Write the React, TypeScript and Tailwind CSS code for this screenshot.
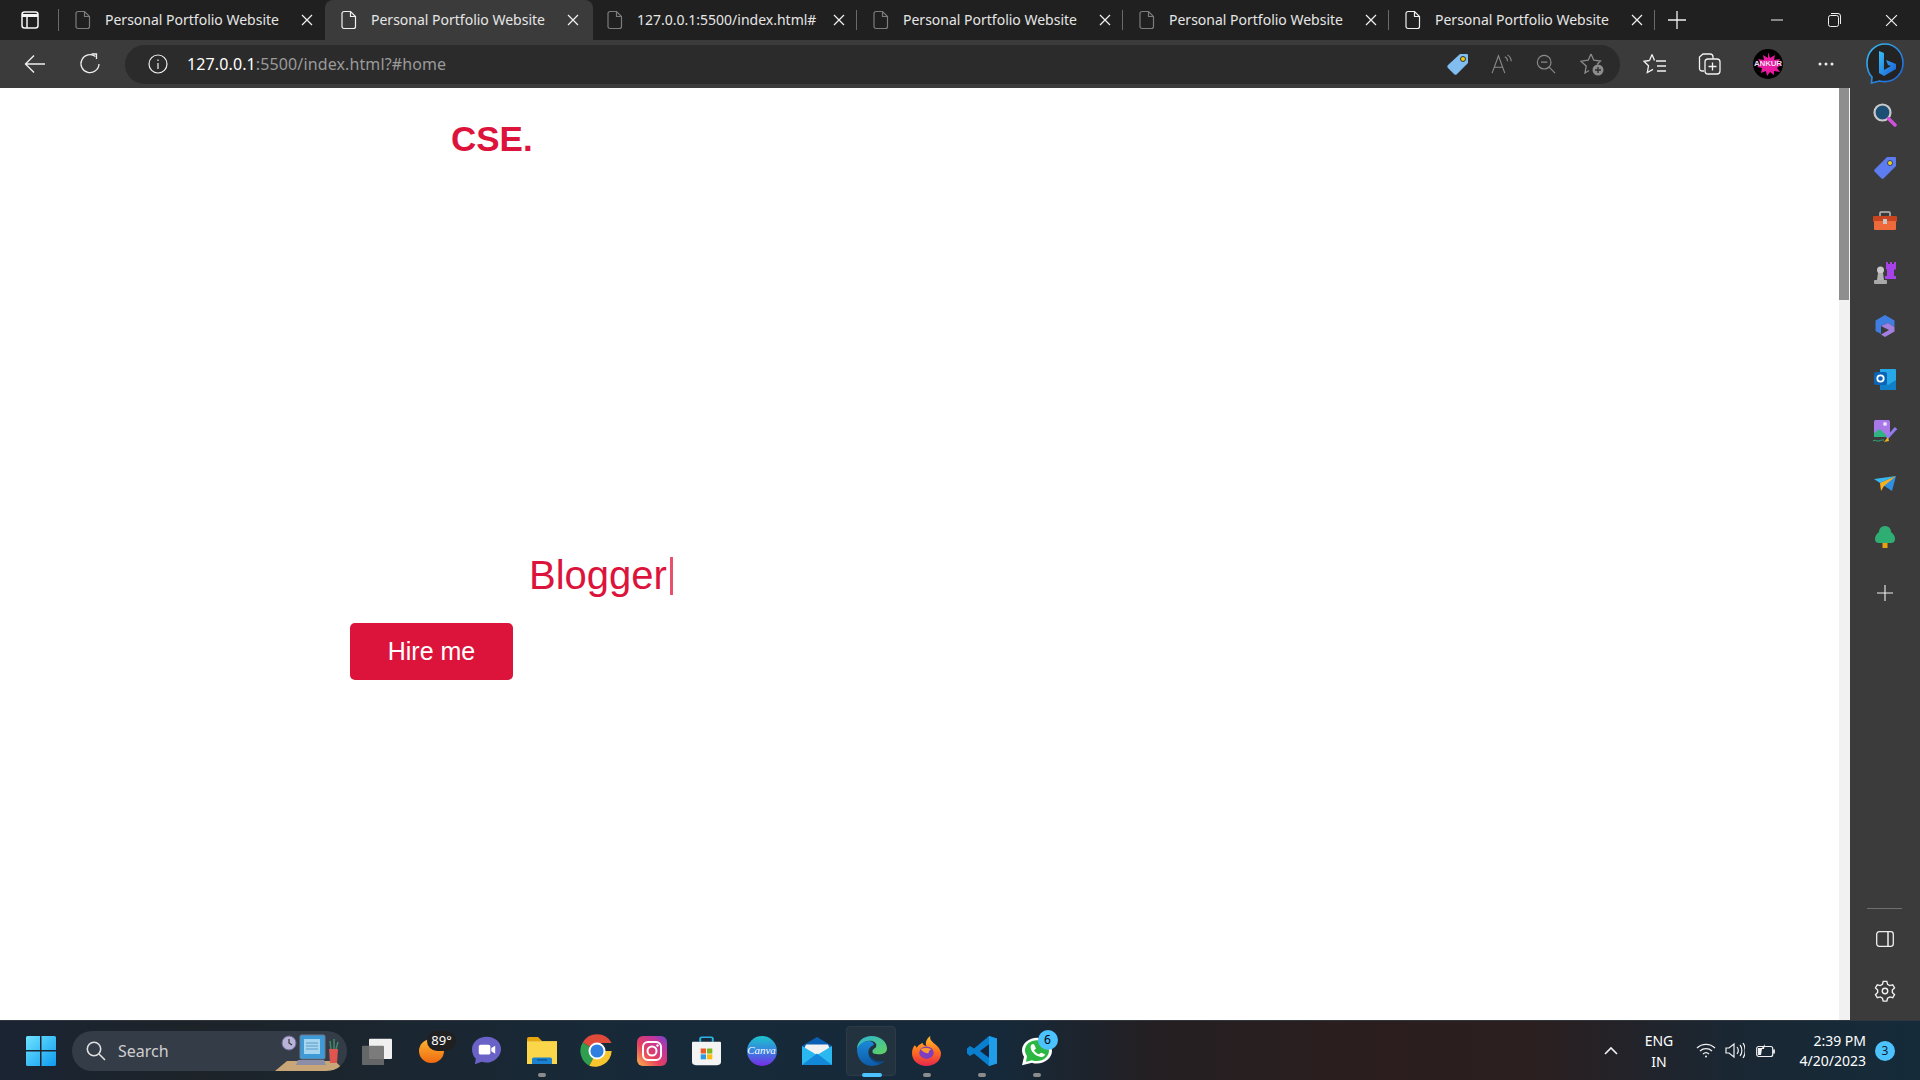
import React from "react";

const ui = { fontFamily: '"Noto Sans", "Open Sans", sans-serif' };

function FileIcon({ active }: { active?: boolean }) {
  return (
    <svg width="18" height="20" viewBox="0 0 18 20" fill="none" stroke={active ? "#f0f0f0" : "#7c7c7c"} strokeWidth="1.2">
      <path d="M4 1.5h6.5L15.5 6.5V16.5a2 2 0 0 1-2 2H4a2 2 0 0 1-2-2V3.500a2 2 0 0 1 2-2Z" />
      <path d="M10.5 1.500V6.500H15.500" />
    </svg>
  );
}

function CloseX({ size = 12, w = 1.2 }: { size?: number; w?: number }) {
  return (
    <svg width={size} height={size} viewBox="0 0 12 12" stroke="#f2f2f2" strokeWidth={w}>
      <path d="M1 1l10 10M11 1L1 11" />
    </svg>
  );
}

function Tab({ title, active, bright, sep = true }: { title: string; active?: boolean; bright?: boolean; sep?: boolean }) {
  return (
    <div className={`relative flex h-10 shrink-0 items-center pl-[15px] ${active ? "z-10 w-[268px] rounded-t-lg bg-[#3b3b3b] pr-[14px]" : "w-[266px] pr-[12px]"}`}>
      <FileIcon active={active || bright} />
      <span className="-mt-[2px] ml-[13px] flex-1 truncate text-[14px] text-[#e6e6e6]" style={ui}>{title}</span>
      <CloseX />
      {sep && <span className="absolute right-0 top-[10px] h-[20px] w-px bg-[#6a6a6a]" />}
    </div>
  );
}

function Side({ children }: { children: React.ReactNode }) {
  return <div className="flex h-[52.7px] w-full items-center justify-center">{children}</div>;
}

function TaskItem({ children, dot, active }: { children: React.ReactNode; dot?: boolean; active?: boolean }) {
  return (
    <div className="relative flex h-[60px] w-[55px] shrink-0 items-center justify-center">
      {active && <span className="absolute left-[2px] top-[5px] h-[50px] w-[50px] rounded-[4px] border border-[#2c3b47] bg-[#22333f]" />}
      <span className="relative flex items-center justify-center">{children}</span>
      {dot && <span className={`absolute bottom-[4px] left-1/2 h-[3.500px] -translate-x-1/2 rounded-full ${active ? "w-5 bg-[#4cc2ff]" : "w-2 bg-[#8c8c8c]"}`} />}
    </div>
  );
}

function Windows() {
  return (
    <svg width="30" height="30" viewBox="0 0 30 30">
      <defs>
        <linearGradient id="w" x1="0" y1="0" x2="1" y2="1"><stop offset="0" stopColor="#6fe3ff" /><stop offset="1" stopColor="#0e9bf0" /></linearGradient>
      </defs>
      <path d="M0 1.500A1.500 1.500 0 0 1 1.500 0H14v14H0ZM15.500 0H28.500A1.500 1.500 0 0 1 30 1.500V14H15.500ZM0 15.500h14V30H1.500A1.500 1.500 0 0 1 0 28.500ZM15.500 15.500H30V28.500A1.500 1.500 0 0 1 28.500 30H15.500Z" fill="url(#w)" />
    </svg>
  );
}

function SearchArt() {
  return (
    <svg width="66" height="38" viewBox="0 0 66 38">
      <path d="M12 28 L60 28 L66 34 Q60 38 50 38 L0 38Z" fill="#c9a678" />
      <circle cx="14" cy="10" r="7" fill="#b8b4d8" stroke="#6e6a96" />
      <path d="M14 6v4l3 2" stroke="#333" strokeWidth="1.2" fill="none" />
      <rect x="25" y="2" width="25" height="24" rx="1.500" fill="#3f9bd8" stroke="#6a7a90" />
      <rect x="29" y="6" width="16" height="15" fill="#a6d5f0" />
      <path d="M31 10h12M31 13h12M31 16h12" stroke="#5b9ac4" />
      <path d="M23 27h26l2 5H21Z" fill="#8c8ea8" />
      <path d="M54 16h9l-1 14h-7Z" fill="#e0564f" />
      <path d="M56 16l-1-8M59 16V6M61 16l2-7" stroke="#3d8b6a" strokeWidth="1.500" />
    </svg>
  );
}

function Chrome() {
  return (
    <svg width="34" height="34" viewBox="2 2 44 44">
      <path d="M24 24 5.500 13A21.500 21.500 0 0 1 43 13.500H24Z" fill="#e04a3b" />
      <path d="M24 24 14 43A21.500 21.500 0 0 1 5.500 13Z" fill="#2f9e4f" />
      <path d="M24 24H43A21.500 21.500 0 0 1 14 43Z" fill="#f7c52d" />
      <circle cx="24" cy="24" r="11" fill="#fff" />
      <circle cx="24" cy="24" r="8.500" fill="#2f7fe0" />
    </svg>
  );
}

function Instagram() {
  return (
    <svg width="30" height="30" viewBox="0 0 30 30">
      <defs>
        <linearGradient id="ig" x1="0" y1="1" x2="1" y2="0"><stop offset="0" stopColor="#fdb44a" /><stop offset=".4" stopColor="#e6405f" /><stop offset=".75" stopColor="#c0359f" /><stop offset="1" stopColor="#6a4ad0" /></linearGradient>
      </defs>
      <rect width="30" height="30" rx="6" fill="url(#ig)" />
      <rect x="6" y="6" width="18" height="18" rx="5" fill="none" stroke="#fff" strokeWidth="2" />
      <circle cx="15" cy="15" r="4.500" fill="none" stroke="#fff" strokeWidth="2" />
      <circle cx="20.500" cy="9.500" r="1.200" fill="#fff" />
    </svg>
  );
}

function Store() {
  return (
    <svg width="29" height="30" viewBox="0 0 30 36" preserveAspectRatio="none">
      <path d="M8.500 7V3a1.500 1.500 0 0 1 1.500-1.500h10A1.500 1.500 0 0 1 21.500 3v4" fill="none" stroke="#2ab4e8" strokeWidth="2" />
      <path d="M1 7h28a1 1 0 0 1 1 1v23a4 4 0 0 1-4 4H4a4 4 0 0 1-4-4V8a1 1 0 0 1 1-1Z" fill="#f4f4f4" />
      <rect x="9" y="15" width="5.500" height="6" fill="#ea5a2b" />
      <rect x="15.500" y="15" width="5.500" height="6" fill="#7db81f" />
      <rect x="9" y="22" width="5.500" height="6" fill="#2b9be8" />
      <rect x="15.500" y="22" width="5.500" height="6" fill="#fbbc10" />
    </svg>
  );
}

function Mail() {
  return (
    <svg width="30" height="28" viewBox="0 0 30 34" preserveAspectRatio="none">
      <path d="M0 11 15 0l15 11v6H0Z" fill="#0a5fb4" />
      <path d="M4 9h22l2 6-13 9L2 15Z" fill="#f2f2f2" />
      <path d="M0 11l15 11 15-11v23H0Z" fill="#29b8f0" />
      <path d="M0 34 15 20l15 14Z" fill="#1488d8" />
    </svg>
  );
}

function Edge() {
  return (
    <svg width="31" height="30" viewBox="0 0 32 36" preserveAspectRatio="none">
      <defs>
        <linearGradient id="e1" x1="0" y1="0" x2="1" y2="1"><stop offset="0" stopColor="#2bb3d8" /><stop offset="1" stopColor="#62d35c" /></linearGradient>
        <linearGradient id="e2" x1="0" y1="0" x2="0" y2="1"><stop offset="0" stopColor="#1a8ad8" /><stop offset="1" stopColor="#0d5ba8" /></linearGradient>
      </defs>
      <path d="M1 16C1 6 8 0 16 0c9 0 16 7 16 15 0 5-4 7-8 7-5 0-7-1-7-3 0-5 4-3 4-8 0-3-4-6-9-5C7 7 3 11 1 16Z" fill="url(#e1)" />
      <path d="M1 16C3 10 8 6 13 6c4 0 6 3 5 5-3 1-6 5-5 11 1 6 6 11 13 11-3 2-6 3-10 3C7 36 1 27 1 16Z" fill="url(#e2)" />
      <path d="M13 22c1 6 6 11 13 11 2-1 3-2 4-3-4 1-9 1-12-2-3-2-4-5-5-6Z" fill="#0b4c92" />
    </svg>
  );
}

function Firefox() {
  return (
    <svg width="29" height="30" viewBox="0 0 30 36" preserveAspectRatio="none">
      <defs>
        <linearGradient id="ff" x1="0" y1="0" x2="0" y2="1"><stop offset="0" stopColor="#ffc02e" /><stop offset=".55" stopColor="#ff6a1f" /><stop offset="1" stopColor="#e6274f" /></linearGradient>
      </defs>
      <path d="M15 36C6 36 0 29 0 21c0-4 1-8 3-10l2 3c1-3 3-4 6-6 0 2 1 3 4 4-2-4 1-10 4-12-1 4 1 6 5 10 3 3 6 7 6 11 0 9-7 15-15 15Z" fill="url(#ff)" />
      <circle cx="15" cy="20" r="7.500" fill="#7d3ec0" />
      <path d="M9 16c3-2 8-2 11 0-2 1-3 3-3 5-3 0-6-2-8-5Z" fill="#ff9a2e" />
    </svg>
  );
}

function VSCode() {
  return (
    <svg width="30" height="30" viewBox="0 0 30 36" preserveAspectRatio="none">
      <path d="M22 0l8 3v30l-8 3L7 21l-4 3-3-3V15l3-3 4 3Z" fill="#0a7fcf" />
      <path d="M22 0l8 3v30l-8 3Z" fill="#1f9de8" />
      <path d="M22 10v16l-9-8Z" fill="#14243a" />
    </svg>
  );
}

function WhatsApp() {
  return (
    <svg width="30" height="30" viewBox="0 0 30 36" preserveAspectRatio="none">
      <path d="M15 2C7 2 0 9 0 17c0 3 1 6 2 8L0 35l10-3c2 1 3 1 5 1 8 0 15-7 15-15S23 2 15 2Z" fill="#fff" />
      <path d="M15 5C8.500 5 3 10 3 17c0 3 1 5 2 7L4 31l6-2c2 1 3 1 5 1 7 0 12-6 12-13S21.500 5 15 5Z" fill="#2bb741" />
      <path d="M10 10c-1 1-2 3-1 6 1 4 5 8 9 9 3 1 5-1 5-3l-4-2-2 2c-2-1-4-3-5-5l2-2-2-5Z" fill="#fff" />
    </svg>
  );
}

function App() {
  return (
    <div className="flex h-[1080px] w-[1920px] flex-col overflow-hidden bg-white">
      {/* tab strip */}
      <div className="flex h-10 shrink-0 items-center bg-[#202020]">
        <div className="relative flex h-10 w-[59px] shrink-0 items-center pl-[21px]">
          <svg width="18" height="18" viewBox="0 0 18 18" fill="none" stroke="#f5f5f5" strokeWidth="1.500">
            <rect x="1" y="1" width="16" height="16" rx="2.500" />
            <path d="M1 4.500h16" strokeWidth="3" />
            <path d="M6 5v12" />
          </svg>
          <span className="absolute right-0 top-[9px] h-[22px] w-px bg-[#6a6a6a]" />
        </div>
        <Tab title="Personal Portfolio Website" sep={false} />
        <Tab title="Personal Portfolio Website" active sep={false} />
        <div className="-ml-[2px] flex">
          <Tab title="127.0.0.1:5500/index.html#" />
          <Tab title="Personal Portfolio Website" />
          <Tab title="Personal Portfolio Website" />
          <Tab title="Personal Portfolio Website" bright />
        </div>
        <div className="ml-[12px] flex w-[20px] items-center justify-center">
          <svg width="18" height="18" viewBox="0 0 18 18" stroke="#f0f0f0" strokeWidth="1.300"><path d="M9 0v18M0 9h18" /></svg>
        </div>
        <div className="ml-[75px] flex w-[30px] justify-center">
          <svg width="12" height="2" viewBox="0 0 12 2" stroke="#eee"><path d="M0 1h12" /></svg>
        </div>
        <div className="ml-[27px] flex w-[30px] justify-center">
          <svg width="13" height="14" viewBox="0 0 13 14" fill="none" stroke="#eee"><rect x=".5" y="2.500" width="10" height="11" rx="2" /><path d="M3 .5h7a2.500 2.500 0 0 1 2.500 2.500v8" /></svg>
        </div>
        <div className="ml-[27px] flex w-[30px] justify-center"><CloseX size={13} w={1.1} /></div>
      </div>

      {/* toolbar */}
      <div className="flex h-12 shrink-0 items-center bg-[#3b3b3b]">
        <div className="flex w-[70px] justify-center">
          <svg width="22" height="20" viewBox="0 0 22 20" fill="none" stroke="#eee" strokeWidth="1.400"><path d="M21 10H2M10 1.500 1.500 10l8.500 8.500" /></svg>
        </div>
        <div className="flex w-[40px] justify-center">
          <svg width="22" height="22" viewBox="0 0 22 22" fill="none" stroke="#eee" strokeWidth="1.300"><path d="M16.500 3.500A9 9 0 1 0 20 11" /><path d="M12.500 1h5v5" /></svg>
        </div>
        <div className="ml-[15px] flex h-[39px] w-[1495px] items-center rounded-full bg-[#2b2b2b]">
          <div className="ml-[23px] flex w-5 justify-center">
            <svg width="20" height="20" viewBox="0 0 20 20" fill="none" stroke="#eee" strokeWidth="1.200"><circle cx="10" cy="10" r="9" /><path d="M10 9v6M10 5.500v1.500" /></svg>
          </div>
          <span className="ml-[19px] text-[16px] tracking-[0.12px] text-[#9a9a9a]" style={ui}><span className="text-white">127.0.0.1</span>:5500/index.html?#home</span>
          <div className="ml-auto mr-[16px] flex items-center gap-[20px]">
            <svg width="24" height="24" viewBox="0 0 24 24"><path d="M14 2h7a1 1 0 0 1 1 1v8L11 22a2 2 0 0 1-3 0l-6-6a2 2 0 0 1 0-3Z" fill="#82bdf0" /><circle cx="17" cy="7" r="2.500" fill="#f2c811" stroke="#333" /></svg>
            <svg className="ml-[1px]" width="24" height="20" viewBox="0 0 26 22" fill="none" stroke="#8c8c8c" strokeWidth="1.200"><path d="M1 21 8 2l7 19M3.500 14.500h9" /><path d="M15 3c2 1 3 3 3 5M18 1c3 2 4 4 4 7" /></svg>
            <svg className="ml-[1px]" width="20" height="20" viewBox="0 0 22 22" fill="none" stroke="#8c8c8c" strokeWidth="1.300"><circle cx="9" cy="9" r="7.500" /><path d="M5.500 9h7M14.500 14.500l6.500 6.500" /></svg>
            <svg className="ml-[4px]" width="24" height="24" viewBox="0 0 24 24" fill="none" stroke="#8c8c8c" strokeWidth="1.300"><path d="M11 2 13.800 8.200 20.500 9 17 12.500M9 18.500 5 21l1.200-7L1 9.200 8.200 8.200 11 2" /><circle cx="18" cy="18" r="5.500" fill="#8c8c8c" stroke="none" /><path d="M18 15v6M15 18h6" stroke="#2b2b2b" /></svg>
          </div>
        </div>
        <div className="ml-[22px] flex w-[26px] justify-center">
          <svg width="24" height="22" viewBox="0 0 24 22" fill="none" stroke="#f2f2f2" strokeWidth="1.300"><path d="M9 1.500 11.500 7.500M6.500 7.500 1 8.300l4.500 4.500-1.200 6.800 5.700-3.200M6.500 7.500 9 1.500" /><path d="M13 8h10M14 13h9M14 18h9" /></svg>
        </div>
        <div className="ml-[29px] flex w-[26px] justify-center">
          <svg width="24" height="24" viewBox="0 0 24 24" fill="none" stroke="#f2f2f2" strokeWidth="1.300"><path d="M6 19H4a2.500 2.500 0 0 1-2.500-2.500V5L5 2h7a3 3 0 0 1 3 3v2" /><rect x="7" y="7" width="15" height="15" rx="3" /><path d="M14.500 10.500v8M10.500 14.500h8" /></svg>
        </div>
        <div className="relative ml-[30px] flex h-[30px] w-[30px] items-center justify-center overflow-hidden rounded-full bg-black">
          <svg className="absolute" width="30" height="30" viewBox="0 0 30 30"><path d="M15 3l2 6 5-3-1 5 6-1-3 5 5 0-5 4 3 4-6-1 0 4-4-3-3 4-1-5-5 2 1-5-5-1 4-3-3-5 6 1-1-5 5 3Z" fill="#e81aa0" /></svg>
          <span className="relative text-[8px] font-bold leading-none tracking-[-0.2px] text-[#f5d9ee]" style={{ fontFamily: '"Liberation Sans", sans-serif' }}>ANKUR</span>
        </div>
        <div className="ml-[35px] flex w-[16px] justify-center">
          <svg width="16" height="4" viewBox="0 0 16 4" fill="#eee"><circle cx="2" cy="2" r="1.500" /><circle cx="8" cy="2" r="1.500" /><circle cx="14" cy="2" r="1.500" /></svg>
        </div>
        <div className="ml-[32px] flex w-[38px] justify-center">
          <svg width="38" height="42" viewBox="0 0 38 42" fill="none">
            <defs><linearGradient id="bg" x1="0" y1="0" x2="1" y2="1"><stop offset="0" stopColor="#37bdf5" /><stop offset="1" stopColor="#1b5fd8" /></linearGradient></defs>
            <path d="M19 1C9 1 1 9 1 20c0 6 2 11 5 14l-.5 6 8-2c2 .5 3.500 .6 5.500 .6 10 0 18-8 18-18.600S29 1 19 1Z" stroke="url(#bg)" strokeWidth="1.600" fill="#232323" />
            <path d="M13 8l5 2v17l7-4-3-1-2-5 10 4v5l-12 7-5-3Z" fill="url(#bg)" />
          </svg>
        </div>
      </div>

      {/* middle */}
      <div className="flex min-h-0 flex-1">
        <main className="w-[1839px] shrink-0 bg-white" style={{ fontFamily: '"Liberation Sans", Arial, sans-serif' }}>
          <div className="ml-[451px] mt-[31px] text-[35px] font-bold leading-10 text-[#dc143c]">CSE.</div>
          <div className="ml-[529px] mt-[392px] flex h-12 items-center text-[40px] leading-[48px] text-[#dc143c]">
            Blogger<span className="ml-[3px] mt-[1px] h-[38px] w-[3px] bg-[#e8506d]" />
          </div>
          <button className="ml-[350px] mt-[24px] flex h-[57px] w-[163px] items-center justify-center rounded-[5px] bg-[#dc143c] text-[25px] text-white">Hire me</button>
        </main>
        <div className="flex w-[11px] shrink-0 flex-col bg-[#f1f1f1]">
          <div className="h-[212px] w-[10px] bg-[#8e8e8e]" />
        </div>
        <aside className="flex w-[70px] shrink-0 flex-col items-center bg-[#3b3b3b] pt-[1px] pr-[1px]">
          <Side>
            <svg width="24" height="24" viewBox="0 0 24 24"><circle cx="9.500" cy="9.500" r="8" fill="#1d4f74" stroke="#c9c9c9" strokeWidth="2.200" /><path d="M15.500 15.500 22 22" stroke="#d44fdc" strokeWidth="3.500" strokeLinecap="round" /></svg>
          </Side>
          <Side>
            <svg width="22" height="22" viewBox="0 0 22 22"><path d="M13 0h8a1 1 0 0 1 1 1v8L10 21a2 2 0 0 1-3 0l-6-6a2 2 0 0 1 0-3Z" fill="#5c7cf0" /><circle cx="16" cy="6" r="2.500" fill="#f2d311" stroke="#2d3a80" /></svg>
          </Side>
          <Side>
            <svg width="24" height="20" viewBox="0 0 24 20"><path d="M7 5V2a1 1 0 0 1 1-1h8a1 1 0 0 1 1 1v3" fill="none" stroke="#bbb" strokeWidth="1.500" /><rect y="5" width="24" height="6" rx="1" fill="#c8441f" /><rect x="1" y="10" width="22" height="9" rx="1" fill="#ef6a3a" /><rect x="10" y="8" width="4" height="5" fill="#c8c8c8" /></svg>
          </Side>
          <Side>
            <svg width="24" height="24" viewBox="0 0 24 24"><path d="M14 1h2v2h2V1h2v2h2V1h2v7l-2 1v6h2v3H13v-3h2V9l-1-1Z" transform="translate(-1 0)" fill="#a742e8" /><circle cx="7.500" cy="9" r="3.500" fill="#c8c8c8" /><path d="M5 12h5l1 7H4Z" fill="#b0b0b0" /><rect x="1" y="19" width="13" height="4" rx="1" fill="#a8a8a8" /></svg>
          </Side>
          <Side>
            <svg width="22" height="24" viewBox="0 0 22 24" fill="none"><path d="M11 1 20.500 6.500 V13 L14 9 7 12 V20 L1.500 17 V6.500Z" fill="#3f7de0" /><path d="M7 12l7-3 6.500 4v4.500L11 23 7 20.500l8-4.500Z" fill="#a37fe0" /></svg>
          </Side>
          <Side>
            <svg width="22" height="22" viewBox="0 0 22 22"><path d="M6 1h15a1 1 0 0 1 1 1v19a1 1 0 0 1-1 1H6Z" fill="#27a8e8" /><path d="M6 12l8 5 8-5v10H6Z" fill="#1080c8" /><rect y="4" width="13" height="13" rx="2" fill="#0a64b8" /><circle cx="6.500" cy="10.500" r="3.200" fill="none" stroke="#fff" strokeWidth="1.800" /></svg>
          </Side>
          <Side>
            <svg width="24" height="24" viewBox="0 0 24 24"><rect x="1" y="1" width="16" height="17" rx="1.500" fill="#a878e8" /><path d="M1 18V14l6-4 8 8Z" fill="#2fb380" /><circle cx="12" cy="5" r="2" fill="#e8dcfa" /><path d="M23 9 14 19" stroke="#8f7cf0" strokeWidth="3" /><path d="M15 18l-4 5 5-1Z" fill="#f2b418" /><path d="M0 22c3-2 4 1 6 0s3-1 5-1" stroke="#2fb380" fill="none" /></svg>
          </Side>
          <Side>
            <svg width="22" height="16" viewBox="0 0 22 16"><path d="M22 0 0 3l6 4Z" fill="#38b8f0" /><path d="M22 0 6 7l12 8Z" fill="#2f8fe0" /><path d="M22 0 6 7l1 8 3-5Z" fill="#f5b120" /></svg>
          </Side>
          <Side>
            <svg width="20" height="22" viewBox="0 0 20 22"><path d="M10 0c4 0 6 3 6 6 3 2 4 5 4 7 0 3-2 4-4 4H4c-2 0-4-1-4-4 0-2 1-5 4-7 0-3 2-6 6-6Z" fill="#2fae74" /><rect x="7.500" y="17" width="5" height="5" fill="#e8a010" /></svg>
          </Side>
          <div className="mt-[4px] flex h-[52px] w-full items-center justify-center">
            <svg width="16" height="16" viewBox="0 0 16 16" stroke="#f0f0f0" strokeWidth="1.100"><path d="M8 0v16M0 8h16" /></svg>
          </div>
          <div className="mt-[289px] h-px w-[35px] bg-[#6f6f6f]" />
          <div className="mt-[20px] flex h-5 items-center">
            <svg width="18" height="16" viewBox="0 0 18 16" fill="none" stroke="#f0f0f0" strokeWidth="1.300"><rect x=".7" y=".7" width="16.600" height="14.600" rx="2.500" /><path d="M12 1v14" strokeWidth="1.500" /></svg>
          </div>
          <div className="mt-[31px] flex h-[22px] items-center">
            <svg width="22" height="24" viewBox="0 0 24 24" fill="none" stroke="#f0f0f0" strokeWidth="1.500"><path d="M10 1.500h4l.8 3.200 2.400 1.400 3.200-.9 2 3.400-2.400 2.300v2.800l2.400 2.300-2 3.400-3.200-.9-2.400 1.400-.8 3.200h-4l-.8-3.200-2.400-1.400-3.200.9-2-3.400 2.400-2.300v-2.800L1.600 8.600l2-3.400 3.200.9 2.400-1.400Z" /><circle cx="12" cy="12" r="3" /></svg>
          </div>
        </aside>
      </div>

      {/* taskbar */}
      <div className="flex h-[60px] shrink-0 items-center border-t border-[#30373f] bg-[linear-gradient(90deg,#1a2433_0%,#1d2329_10%,#172a3a_35%,#15293a_52%,#241f22_60%,#2c1e1e_72%,#2b1f20_80%,#1a2733_90%,#152b3a_100%)]">
        <div className="ml-[26px] flex w-[30px] items-center"><Windows /></div>
        <div className="ml-[16px] flex h-[40px] w-[275px] items-center overflow-hidden rounded-full bg-[#343c47] pl-[14px]">
          <svg width="20" height="20" viewBox="0 0 20 20" fill="none" stroke="#e0e0e0" strokeWidth="1.600"><circle cx="8" cy="8" r="6.700" /><path d="M13 13l6 6" /></svg>
          <span className="ml-[12px] text-[16px] text-[#cfcfcf]" style={ui}>Search</span>
          <span className="ml-auto mr-[6px] flex self-end"><SearchArt /></span>
        </div>
        <div className="ml-[2px] flex">
          <TaskItem>
            <svg width="30" height="28" viewBox="0 0 30 32" preserveAspectRatio="none"><rect x="7" y="2" width="23" height="23" rx="1" fill="#f0f0f0" /><rect y="10" width="22" height="22" rx="1" fill="#6e6e6e" fillOpacity=".9" /></svg>
          </TaskItem>
          <TaskItem>
            <svg width="25" height="24" viewBox="0 0 26 28" preserveAspectRatio="none"><defs><linearGradient id="sun" x1="0" y1="0" x2="0" y2="1"><stop offset="0" stopColor="#fdb62f" /><stop offset="1" stopColor="#ef6a12" /></linearGradient></defs><ellipse cx="13" cy="14" rx="13" ry="14" fill="url(#sun)" /></svg>
            <span className="absolute left-[8px] top-[-8px] flex h-5 w-[29px] items-center justify-center rounded-full bg-[#202020] text-[13px] text-white" style={ui}>89°</span>
          </TaskItem>
          <TaskItem>
            <svg width="29" height="29" viewBox="0 0 30 36" preserveAspectRatio="none"><path d="M15 1C7 1 0 8 0 16c0 6 2 10 4 12l-1 7 7-3c2 .6 3 1 5 1 8 0 15-8 15-17S23 1 15 1Z" fill="#6b62c8" /><rect x="7" y="11" width="12" height="12" rx="2" fill="#fff" /><path d="M20 15l4-3v10l-4-3Z" fill="#fff" /></svg>
          </TaskItem>
          <TaskItem dot>
            <svg width="30" height="27" viewBox="0 0 30 33" preserveAspectRatio="none"><path d="M0 2a2 2 0 0 1 2-2h9l4 5H0Z" fill="#e8a60c" /><rect y="5" width="30" height="28" fill="#fbd54a" /><path d="M5 27a2 2 0 0 1 2-2h16a2 2 0 0 1 2 2v6H5Z" fill="#1b82d2" /><path d="M10 28h10" stroke="#0a4d8a" strokeWidth="1.500" /></svg>
          </TaskItem>
          <TaskItem><Chrome /></TaskItem>
          <TaskItem><Instagram /></TaskItem>
          <TaskItem><Store /></TaskItem>
          <TaskItem>
            <span className="flex h-[30px] w-[30px] items-center justify-center rounded-full bg-[linear-gradient(180deg,#1cc4cc_0%,#3a7be0_55%,#7a2be8_100%)] text-[11px] italic text-white" style={{ fontFamily: '"Liberation Serif", serif' }}>Canva</span>
          </TaskItem>
          <TaskItem><Mail /></TaskItem>
          <TaskItem dot active><Edge /></TaskItem>
          <TaskItem dot><Firefox /></TaskItem>
          <TaskItem dot><VSCode /></TaskItem>
          <TaskItem dot>
            <WhatsApp />
            <span className="absolute left-[16px] top-[-6px] flex h-5 w-5 items-center justify-center rounded-full bg-[#4cc2ff] text-[12px] text-black" style={ui}>6</span>
          </TaskItem>
        </div>
        <div className="ml-auto flex items-center text-white">
          <svg className="-mr-[1px] translate-x-[1px]" width="14" height="9" viewBox="0 0 14 9" fill="none" stroke="#f0f0f0" strokeWidth="1.600"><path d="M1 8l6-6 6 6" /></svg>
          <div className="ml-[24px] flex w-[38px] flex-col items-center text-[14px] leading-[21px]" style={ui}><span>ENG</span><span>IN</span></div>
          <div className="ml-[18px] flex items-center gap-[9px]">
            <svg width="20" height="15" viewBox="0 0 20 15" fill="none" stroke="#f0f0f0" strokeWidth="1.300"><path d="M1 5a13 13 0 0 1 18 0M4 8a9 9 0 0 1 12 0M7 11a4.500 4.500 0 0 1 6 0" /><circle cx="10" cy="13.500" r="1" fill="#f0f0f0" stroke="none" /></svg>
            <svg width="20" height="17" viewBox="0 0 20 17" fill="none" stroke="#f0f0f0" strokeWidth="1.200"><path d="M1 6h3l5-4v13l-5-4H1Z" /><path d="M12 5c1.500 2 1.500 5 0 7M15 3c2.500 3 2.500 8 0 11M18 1c3 4 3 11 0 15" /></svg>
            <svg className="ml-[2px]" width="20" height="16" viewBox="0 0 20 16" fill="none" stroke="#f0f0f0" strokeWidth="1.200"><rect x=".7" y="3.500" width="16" height="10" rx="2" /><path d="M18 6.500v4" strokeWidth="1.800" /><path d="M2 12V5h4l3-4-1 5h-2l-1 6Z" fill="#f0f0f0" stroke="none" /></svg>
          </div>
          <div className="ml-[18px] flex w-[72px] flex-col items-end whitespace-nowrap text-[14px] leading-[20px]" style={ui}><span>2:39 PM</span><span>4/20/2023</span></div>
          <div className="ml-[9px] mr-[25px] flex h-5 w-5 items-center justify-center rounded-full bg-[#4cc2ff] text-[12px] text-[#10202c]" style={ui}>3</div>
        </div>
      </div>
    </div>
  );
}

export default App;
